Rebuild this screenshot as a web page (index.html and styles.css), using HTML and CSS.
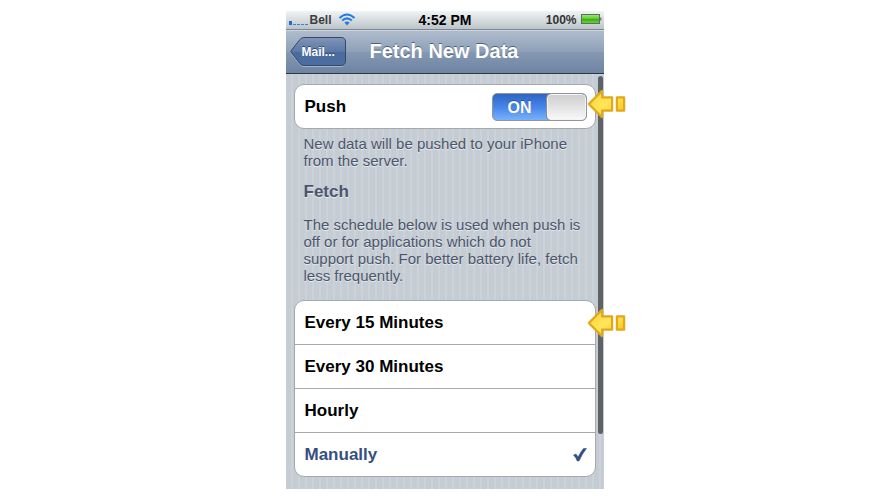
FILE: index.html
```
<!DOCTYPE html>
<html lang="en">
<head>
    <meta charset="UTF-8">
    <meta name="viewport" content="width=device-width, initial-scale=1.0">
    <title>Fetch New Data</title>
    <link rel="stylesheet" href="styles.css">
</head>
<body>
    <div class="phone">
        <!-- Status bar -->
        <div class="status-bar">
            <div class="carrier">
                <span class="signal"><i class="strong"></i><i></i><i></i><i></i><i></i></span>
                <span>Bell</span>
                <svg class="wifi" width="18" height="13" viewBox="0 0 18 13">
                    <path d="M1.5 5 Q9 -2 16.5 5" />
                    <path d="M4.2 7.6 Q9 3.2 13.8 7.6" />
                    <path class="dot" d="M6.4 9.6 Q9 7.4 11.6 9.6 L9 12.4 Z" />
                </svg>
            </div>
            <div class="time">4:52 PM</div>
            <div class="power">
                <span>100%</span>
                <svg width="21" height="11" viewBox="0 0 21 11">
                    <defs>
                        <linearGradient id="charge" x1="0" y1="0" x2="0" y2="1">
                            <stop offset="0" stop-color="#a5e884" />
                            <stop offset="0.45" stop-color="#62cc32" />
                            <stop offset="0.5" stop-color="#35ad0c" />
                            <stop offset="1" stop-color="#6bd836" />
                        </linearGradient>
                    </defs>
                    <rect x="0.5" y="0.5" width="18" height="9" fill="url(#charge)" stroke="#5f6a66" />
                    <path d="M19 3.500h1.500v3H19z" fill="#777f84" />
                </svg>
            </div>
        </div>

        <!-- Navigation bar -->
        <header class="nav-bar">
            <a class="back" href="#mail">
                <svg width="57" height="30" viewBox="0 0 57 30" aria-hidden="true">
                    <defs>
                        <linearGradient id="backFill" x1="0" y1="0" x2="0" y2="1">
                            <stop offset="0" stop-color="#8195b6" />
                            <stop offset="0.5" stop-color="#5a78a6" />
                            <stop offset="0.52" stop-color="#496b9e" />
                            <stop offset="1" stop-color="#4b6d9f" />
                        </linearGradient>
                    </defs>
                    <path d="M14 1.500H51Q55.500 1.500 55.500 6V24Q55.500 29.500 51 29.500H14Q11 29.500 9.500 27L1 16Q0.500 15.500 1 15L9.500 4Q11.500 1.500 14 1.500Z" fill="none" stroke="#a6b5ca" />
                    <path d="M14 0.500H51Q55.500 0.500 55.500 5V24Q55.500 28.500 51 28.500H14Q11 28.500 9.500 26L1 15Q0.500 14.500 1 14L9.500 3Q11.500 0.500 14 0.500Z" fill="url(#backFill)" stroke="#36486a" />
                </svg>
                <span>Mail...</span>
            </a>
            <h1>Fetch New Data</h1>
        </header>

        <!-- Settings -->
        <main class="content">
            <div class="group">
                <label class="row">
                    <span>Push</span>
                    <span class="switch">
                        <input type="checkbox" checked>
                        <span class="on">ON</span>
                        <span class="knob"></span>
                    </span>
                    <svg class="pointer" width="40" height="32" viewBox="0 0 40 32" aria-hidden="true">
                        <defs>
                            <linearGradient id="gold" x1="0" y1="0" x2="1" y2="1">
                                <stop offset="0" stop-color="#ffd23c" />
                                <stop offset="0.5" stop-color="#ffe658" />
                                <stop offset="1" stop-color="#f8ba12" />
                            </linearGradient>
                        </defs>
                        <path class="halo" d="M2 16L15 3V9.500H25V22.500H15V29Z M30 9.500H37V22.500H30Z" />
                        <path class="gold" d="M2 16L15 3V9.500H25V22.500H15V29Z M30 9.500H37V22.500H30Z" />
                    </svg>
                </label>
            </div>
            <p>New data will be pushed to your iPhone from the server.</p>

            <h2 id="fetch">Fetch</h2>
            <p>The schedule below is used when push is off or for applications which do not support push. For better battery life, fetch less frequently.</p>

            <div class="group schedule" role="radiogroup" aria-labelledby="fetch">
                <label class="row">
                    <input type="radio" name="schedule">
                    <span>Every 15 Minutes</span>
                    <svg class="pointer" width="40" height="32" viewBox="0 0 40 32" aria-hidden="true">
                        <path class="halo" d="M2 16L15 3V9.500H25V22.500H15V29Z M30 9.500H37V22.500H30Z" />
                        <path class="gold" d="M2 16L15 3V9.500H25V22.500H15V29Z M30 9.500H37V22.500H30Z" />
                    </svg>
                </label>
                <label class="row">
                    <input type="radio" name="schedule">
                    <span>Every 30 Minutes</span>
                </label>
                <label class="row">
                    <input type="radio" name="schedule">
                    <span>Hourly</span>
                </label>
                <label class="row">
                    <input type="radio" name="schedule" checked>
                    <span>Manually</span>
                    <svg class="check" width="14" height="14" viewBox="0 0 14 14" aria-hidden="true">
                        <path d="M0.500 7L3 6L5 9Q7.500 4 10.500 0.500H13.500Q9 6 6 13H4.200Q3 9.500 0.500 7Z" />
                    </svg>
                </label>
            </div>
            <div class="scroll-thumb"></div>
        </main>
    </div>
</body>
</html>
```

FILE: styles.css
```
* {
    margin: 0;
    padding: 0;
    box-sizing: border-box;
}

body {
    font-family: "Liberation Sans", Arial, Helvetica, sans-serif;
    background: #fff;
    color: #000;
    padding: 11px 0;
}

.phone {
    width: 100%;
    max-width: 318px;
    margin: 0 auto;
}

/* Status bar */
.status-bar {
    display: grid;
    grid-template-columns: 1fr auto 1fr;
    align-items: center;
    height: 19px;
    padding: 0 2px 1px 3px;
    background: linear-gradient(#f0f4f5, #bcc4c8);
    border-bottom: 1px solid #7d8792;
    font-size: 14px;
    font-weight: bold;
    line-height: 16px;
}

.carrier,
.power {
    display: flex;
    align-items: center;
    color: #3c3f42;
    font-size: 12px;
}

.carrier {
    gap: 6px;
}

.power {
    justify-content: flex-end;
    gap: 4px;
    color: #333;
}

.signal {
    display: flex;
    align-items: flex-end;
    gap: 1px;
    height: 10px;
    margin-right: -4px;
}

.signal i {
    width: 3px;
    height: 1px;
    background: #3c82d2;
}

.signal .strong {
    height: 4px;
    background: #1e6ed0;
}

.wifi {
    fill: none;
    stroke: #2879dc;
    stroke-width: 2;
}

.wifi .dot {
    fill: #2879dc;
    stroke: none;
}

/* Navigation bar */
.nav-bar {
    display: flex;
    align-items: center;
    gap: 23px;
    height: 44px;
    padding: 0 4px;
    background: linear-gradient(#b0bccd, #8da0b8 50%, #8598b2 51%, #6d84a2);
    border-top: 1px solid #cdd5df;
    border-bottom: 1px solid #2d3642;
}

.back {
    position: relative;
    display: flex;
    align-items: center;
    height: 30px;
    color: #fff;
    font-size: 12px;
    font-weight: bold;
    text-decoration: none;
    text-shadow: 0 -1px 0 #34496c;
}

.back span {
    position: absolute;
    left: 12px;
}

h1 {
    padding-bottom: 2px;
    color: #fff;
    font-size: 20px;
    line-height: 24px;
    text-shadow: 0 -1px 0 #4f6078;
    white-space: nowrap;
}

/* Settings */
.content {
    position: relative;
    padding: 10px 8px 12px;
    background: repeating-linear-gradient(to right, #c5ccd4 0 5px, #cbd2d8 5px 7px);
}

.group {
    background: #fff;
    border: 1px solid #a5a8ac;
    border-radius: 10px;
}

.row {
    position: relative;
    display: flex;
    align-items: center;
    justify-content: space-between;
    height: 44px;
    padding: 0 8px 0 10px;
    border-bottom: 1px solid #a5a8ac;
    font-size: 17px;
    font-weight: bold;
}

.row:last-child {
    height: 43px;
    border-bottom: 0;
}

.content p {
    padding: 6px 14px 0 10px;
    color: #4c566c;
    font-size: 15px;
    line-height: 17px;
    text-shadow: 0 1px 0 #e4e8ec;
}

h2 {
    padding: 13px 10px 0;
    color: #4c566c;
    font-size: 17px;
    line-height: 20px;
    text-shadow: 0 1px 0 #e4e8ec;
}

h2 + p {
    margin: 8px 0 16px;
}

.row input {
    position: absolute;
    opacity: 0;
}

.switch {
    display: flex;
    width: 95px;
    height: 28px;
    overflow: hidden;
    border: 1px solid #929498;
    border-radius: 5px;
    background: linear-gradient(#2d66c4, #4685e8 50%, #78b2fc);
}

.on {
    flex: 1;
    color: #fff;
    font-size: 16px;
    line-height: 28px;
    text-align: center;
    text-shadow: 0 -1px 0 #2453a0;
}

.knob {
    width: 39px;
    border: 1px solid #f5f5f5;
    border-radius: 4px;
    background: linear-gradient(#cfcfcf, #f7f7f7);
    box-shadow: 0 0 0 1px #8a8d94;
}

.schedule .row {
    justify-content: flex-start;
}

.schedule input:checked + span {
    color: #364f80;
}

.check {
    margin-left: auto;
    fill: #304e84;
    stroke: #304e84;
    stroke-width: 0.5;
}

/* Arrows that point at a row from the right */
.pointer {
    position: absolute;
    z-index: 1;
    top: 3px;
    right: -32px;
}

.pointer .gold {
    fill: url(#gold);
    stroke: #e3a812;
    stroke-width: 2;
    stroke-linejoin: round;
}

.pointer .halo {
    fill: none;
    stroke: #c9a860;
    stroke-width: 3;
    stroke-linejoin: round;
    opacity: 0.5;
}

.schedule .pointer {
    top: 6px;
}

.scroll-thumb {
    position: absolute;
    top: 2px;
    right: 1px;
    width: 5px;
    height: 358px;
    border-radius: 3px;
    background: #5d6267;
}
```
